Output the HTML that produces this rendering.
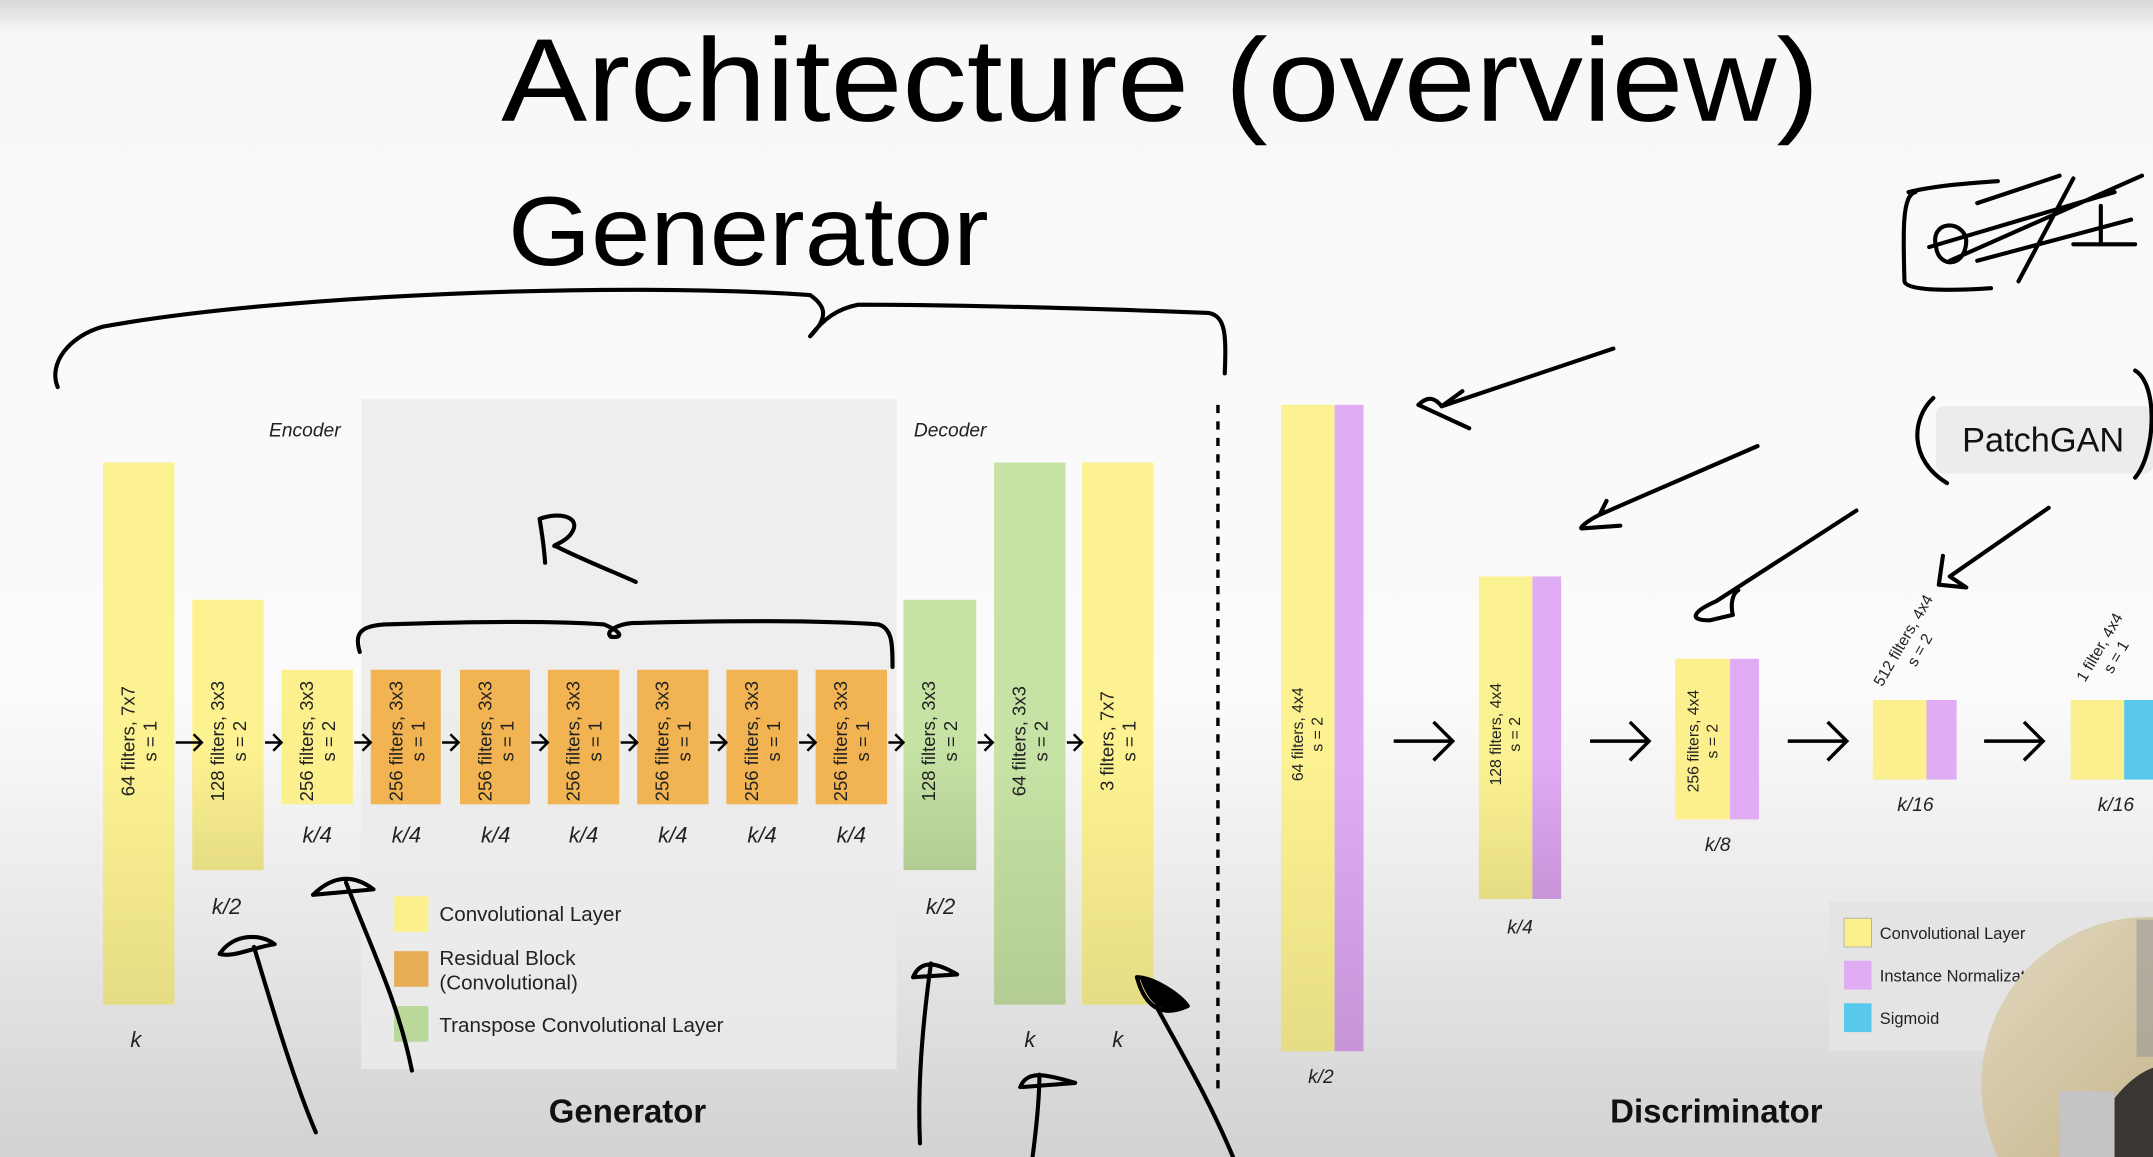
<!DOCTYPE html>
<html><head><meta charset="utf-8"><style>
html,body{margin:0;padding:0;width:2153px;height:1157px;overflow:hidden;background:#fafafa}
svg{display:block;position:absolute;left:0;top:0}
text{font-family:"Liberation Sans",sans-serif}
</style></head><body>
<svg width="2153" height="1157" viewBox="0 0 1568 843" preserveAspectRatio="none" xmlns="http://www.w3.org/2000/svg">
<defs>
<linearGradient id="bg" x1="0" y1="0" x2="0" y2="1">
<stop offset="0" stop-color="#d8d8d8"/><stop offset="0.03" stop-color="#f8f8f8"/><stop offset="0.6" stop-color="#fbfbfb"/><stop offset="0.8" stop-color="#e8e8e8"/><stop offset="1" stop-color="#d2d2d2"/>
</linearGradient>
<linearGradient id="yl" x1="0" y1="0" x2="0" y2="1"><stop offset="0" stop-color="#fdf291"/><stop offset="0.55" stop-color="#fdf291"/><stop offset="1" stop-color="#e6dc84"/></linearGradient>
<linearGradient id="gr" x1="0" y1="0" x2="0" y2="1"><stop offset="0" stop-color="#c6e2a4"/><stop offset="0.55" stop-color="#c6e2a4"/><stop offset="1" stop-color="#b3cc93"/></linearGradient>
<linearGradient id="pu" x1="0" y1="0" x2="0" y2="1"><stop offset="0" stop-color="#e0acf4"/><stop offset="0.55" stop-color="#e0acf4"/><stop offset="1" stop-color="#c894d8"/></linearGradient>
<linearGradient id="cam" x1="0" y1="0" x2="1" y2="1"><stop offset="0" stop-color="#e2d8c0"/><stop offset="0.5" stop-color="#cdbd98"/><stop offset="1" stop-color="#7a7266"/></linearGradient>
</defs>
<rect width="1568" height="843" fill="url(#bg)"/>
<text x="365" y="88" font-size="86" textLength="960" lengthAdjust="spacingAndGlyphs" fill="#000">Architecture (overview)</text>
<rect x="263" y="291" width="390" height="488" fill="#ebebeb" opacity="0.85"/>
<text x="222" y="318" font-size="14" font-style="italic" text-anchor="middle" fill="#222">Encoder</text>
<text x="692" y="318" font-size="14" font-style="italic" text-anchor="middle" fill="#222">Decoder</text>
<g>
<rect x="75" y="337" width="52" height="395" fill="url(#yl)"/>
<rect x="140" y="437" width="52" height="197" fill="url(#yl)"/>
<rect x="205" y="488" width="52" height="98" fill="#fcf08e"/>
<g fill="#f2b452">
<rect x="270" y="488" width="51" height="98"/><rect x="335" y="488" width="51" height="98"/><rect x="399" y="488" width="52" height="98"/>
<rect x="464" y="488" width="52" height="98"/><rect x="529" y="488" width="52" height="98"/><rect x="594" y="488" width="52" height="98"/>
</g>
<rect x="658" y="437" width="53" height="197" fill="url(#gr)"/>
<rect x="724" y="337" width="52" height="395" fill="url(#gr)"/>
<rect x="788" y="337" width="52" height="395" fill="url(#yl)"/>
</g>
<g font-size="13.5" fill="#222" text-anchor="middle">
<text transform="translate(101,540) rotate(-90)"><tspan x="0" y="-3">64 filters, 7x7</tspan><tspan x="0" y="13">s = 1</tspan></text>
<text transform="translate(166,540) rotate(-90)"><tspan x="0" y="-3">128 filters, 3x3</tspan><tspan x="0" y="13">s = 2</tspan></text>
<text transform="translate(231,540) rotate(-90)"><tspan x="0" y="-3">256 filters, 3x3</tspan><tspan x="0" y="13">s = 2</tspan></text>
<text transform="translate(296,540) rotate(-90)"><tspan x="0" y="-3">256 filters, 3x3</tspan><tspan x="0" y="13">s = 1</tspan></text>
<text transform="translate(361,540) rotate(-90)"><tspan x="0" y="-3">256 filters, 3x3</tspan><tspan x="0" y="13">s = 1</tspan></text>
<text transform="translate(425,540) rotate(-90)"><tspan x="0" y="-3">256 filters, 3x3</tspan><tspan x="0" y="13">s = 1</tspan></text>
<text transform="translate(490,540) rotate(-90)"><tspan x="0" y="-3">256 filters, 3x3</tspan><tspan x="0" y="13">s = 1</tspan></text>
<text transform="translate(555,540) rotate(-90)"><tspan x="0" y="-3">256 filters, 3x3</tspan><tspan x="0" y="13">s = 1</tspan></text>
<text transform="translate(620,540) rotate(-90)"><tspan x="0" y="-3">256 filters, 3x3</tspan><tspan x="0" y="13">s = 1</tspan></text>
<text transform="translate(684,540) rotate(-90)"><tspan x="0" y="-3">128 filters, 3x3</tspan><tspan x="0" y="13">s = 2</tspan></text>
<text transform="translate(750,540) rotate(-90)"><tspan x="0" y="-3">64 filters, 3x3</tspan><tspan x="0" y="13">s = 2</tspan></text>
<text transform="translate(814,540) rotate(-90)"><tspan x="0" y="-3">3 filters, 7x7</tspan><tspan x="0" y="13">s = 1</tspan></text>
</g>
<g stroke="#000" stroke-width="1.8" fill="none">
<path d="M128 541h18M141 535l6 6-6 6"/><path d="M193 541h11M199 535l6 6-6 6"/><path d="M258 541h11M264 535l6 6-6 6"/>
<path d="M322 541h12M328 535l6 6-6 6"/><path d="M387 541h11M393 535l6 6-6 6"/><path d="M452 541h11M458 535l6 6-6 6"/>
<path d="M517 541h11M523 535l6 6-6 6"/><path d="M582 541h11M588 535l6 6-6 6"/><path d="M647 541h10M652 535l6 6-6 6"/>
<path d="M712 541h11M717 535l6 6-6 6"/><path d="M777 541h10M782 535l6 6-6 6"/>
</g>
<g font-size="16" font-style="italic" fill="#222" text-anchor="middle">
<text x="231" y="614">k/4</text><text x="296" y="614">k/4</text><text x="361" y="614">k/4</text><text x="425" y="614">k/4</text><text x="490" y="614">k/4</text><text x="555" y="614">k/4</text><text x="620" y="614">k/4</text>
<text x="165" y="666">k/2</text><text x="685" y="666">k/2</text>
<text x="99" y="763">k</text><text x="750" y="763">k</text><text x="814" y="763">k</text>
</g>
<rect x="287" y="653" width="25" height="26" fill="#fcf08e"/>
<rect x="287" y="693" width="25" height="26" fill="#e8ae55"/>
<rect x="287" y="733" width="25" height="26" fill="#b9d89a"/>
<g font-size="15" fill="#222"><text x="320" y="671">Convolutional Layer</text><text x="320" y="703">Residual Block</text><text x="320" y="721">(Convolutional)</text><text x="320" y="752">Transpose Convolutional Layer</text></g>
<text x="457" y="818" font-size="24" font-weight="bold" text-anchor="middle" fill="#111">Generator</text>
<line x1="887" y1="295" x2="887" y2="795" stroke="#000" stroke-width="2.5" stroke-dasharray="6,6"/>
<rect x="933" y="295" width="39" height="471" fill="url(#yl)"/><rect x="972" y="295" width="21" height="471" fill="url(#pu)"/>
<rect x="1077" y="420" width="39" height="235" fill="url(#yl)"/><rect x="1116" y="420" width="21" height="235" fill="url(#pu)"/>
<rect x="1220" y="480" width="40" height="117" fill="#fcf08e"/><rect x="1260" y="480" width="21" height="117" fill="#e0acf4"/>
<rect x="1364" y="510" width="39" height="58" fill="#fcf08e"/><rect x="1403" y="510" width="22" height="58" fill="#e0acf4"/>
<rect x="1508" y="510" width="39" height="58" fill="#fcf08e"/><rect x="1547" y="510" width="21" height="58" fill="#58c8ec"/>
<g font-size="11.5" fill="#222" text-anchor="middle">
<text transform="translate(952,535) rotate(-90)"><tspan x="0" y="-3">64 filters, 4x4</tspan><tspan x="0" y="11">s = 2</tspan></text>
<text transform="translate(1096,535) rotate(-90)"><tspan x="0" y="-3">128 filters, 4x4</tspan><tspan x="0" y="11">s = 2</tspan></text>
<text transform="translate(1240,540) rotate(-90)"><tspan x="0" y="-3">256 filters, 4x4</tspan><tspan x="0" y="11">s = 2</tspan></text>
<text transform="translate(1392,470) rotate(-60)"><tspan x="0" y="-3">512 filters, 4x4</tspan><tspan x="0" y="11">s = 2</tspan></text>
<text transform="translate(1535,475) rotate(-60)"><tspan x="0" y="-3">1 filter, 4x4</tspan><tspan x="0" y="11">s = 1</tspan></text>
</g>
<g stroke="#000" stroke-width="2.5" fill="none">
<path d="M1015 540h42M1044 526l14 14-14 14"/><path d="M1158 540h42M1187 526l14 14-14 14"/><path d="M1302 540h42M1331 526l14 14-14 14"/><path d="M1445 540h42M1474 526l14 14-14 14"/>
</g>
<g font-size="14" font-style="italic" fill="#222" text-anchor="middle">
<text x="962" y="789">k/2</text><text x="1107" y="680">k/4</text><text x="1251" y="620">k/8</text><text x="1395" y="591">k/16</text><text x="1541" y="591">k/16</text>
</g>
<rect x="1332" y="657" width="236" height="109" fill="#e4e4e4"/>
<rect x="1343" y="669" width="20" height="21" fill="#fcf08e" stroke="#aaa" stroke-width="0.6"/>
<rect x="1343" y="700" width="20" height="21" fill="#e0acf4"/>
<rect x="1343" y="731" width="20" height="21" fill="#58c8ec"/>
<g font-size="12" fill="#222"><text x="1369" y="684">Convolutional Layer</text><text x="1369" y="715">Instance Normalizatio</text><text x="1369" y="746">Sigmoid</text></g>
<text x="1250" y="818" font-size="24" font-weight="bold" text-anchor="middle" fill="#111">Discriminator</text>
<rect x="1410" y="296" width="158" height="49" fill="#ececec" rx="6"/>
<text x="1488" y="329" font-size="25" text-anchor="middle" fill="#111">PatchGAN</text>
<circle cx="1565" cy="790" r="122" fill="url(#cam)"/>
<rect x="1556" y="670" width="12" height="100" fill="#999" opacity="0.6"/>
<path d="M1515 843 q25 -55 53 -65 v65z" fill="#3a3632"/>
<rect x="1500" y="795" width="40" height="48" fill="#c4c4c4"/>
<g stroke="#000" stroke-width="3" fill="none" stroke-linecap="round" stroke-linejoin="round">
<path d="M42 282 C35 265 50 245 75 238 C200 215 450 205 590 215 C600 222 605 230 590 245 C600 232 610 225 625 222 C700 222 800 225 880 228 C893 230 893 245 892 272"/>
<path d="M262 475 C258 462 262 456 280 455 C340 453 400 452 440 455 C452 460 455 465 445 464 C440 460 450 455 460 454 C530 452 600 452 640 455 C650 458 650 470 650 486"/>
<path d="M397 410 C396 395 394 385 393 378 C410 372 425 378 415 390 C410 396 400 398 405 398 C420 406 450 418 463 424"/>
<path d="M1175 254 L1050 296 M1050 296 C1045 290 1040 288 1033 295 L1070 312 M1050 296 L1065 285"/>
<path d="M1280 325 L1165 375 M1165 375 C1155 380 1150 385 1152 385 L1180 383 M1165 375 L1170 365"/>
<path d="M1352 372 L1250 438 C1232 446 1230 452 1245 452 L1262 448 C1260 440 1262 432 1266 430"/>
<path d="M1492 370 L1420 420 L1432 428 L1412 426 L1415 405"/>
<path d="M1408 290 C1392 305 1390 335 1418 352 M1555 270 C1572 280 1570 330 1555 348"/>
<path d="M1395 140 C1385 142 1386 170 1387 205 C1388 212 1420 212 1450 210 M1390 140 C1410 135 1440 133 1455 132"/>
<path d="M1410 180 C1405 160 1430 160 1432 175 C1432 195 1412 196 1410 180 M1405 180 L1540 140 M1420 190 L1560 128 M1440 190 L1552 160 M1470 205 L1510 130 M1510 178 L1555 178 M1530 150 L1530 178 M1440 148 L1500 128"/>
<path d="M230 825 C215 790 200 740 185 690 M160 695 C170 680 190 680 200 688 C185 690 170 698 160 695"/>
<path d="M300 780 C290 730 270 690 252 643 M228 652 C240 640 255 635 272 648 L228 652"/>
<path d="M670 833 C668 790 672 745 678 702 M665 712 C670 700 680 700 697 710 L665 712"/>
<path d="M752 843 C755 820 757 800 757 783 M743 792 C748 780 760 782 783 789 L745 792"/>
<path d="M898 843 C880 800 862 770 842 733 M828 712 C840 712 860 725 865 733 C850 740 835 738 828 712"/>
</g>
<path d="M830 712 C845 715 858 725 864 733 C852 738 838 738 830 712z" fill="#000"/>
<text x="370" y="193" font-size="72" font-weight="300" fill="#000" font-family="DejaVu Sans, sans-serif" textLength="350" lengthAdjust="spacingAndGlyphs">Generator</text>
</svg>
</body></html>
